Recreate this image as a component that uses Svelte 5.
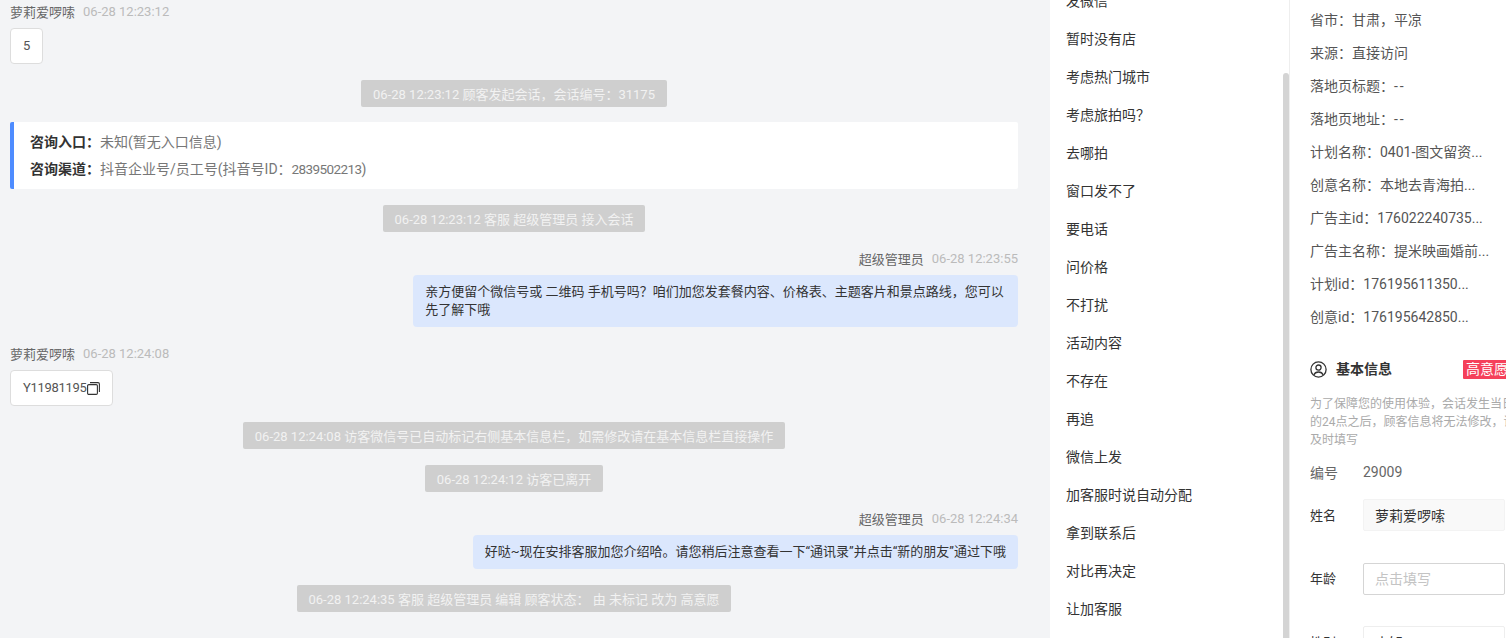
<script>
  const replies = ['发微信', '暂时没有店', '考虑热门城市', '考虑旅拍吗？', '去哪拍', '窗口发不了', '要电话', '问价格', '不打扰', '活动内容', '不存在', '再追', '微信上发', '加客服时说自动分配', '拿到联系后', '对比再决定', '让加客服'];
  const visitor = [
    ['省市', '甘肃，平凉'],
    ['来源', '直接访问'],
    ['落地页标题', '--'],
    ['落地页地址', '--'],
    ['计划名称', '0401-图文留资...'],
    ['创意名称', '本地去青海拍...'],
    ['广告主id', '176022240735...'],
    ['广告主名称', '提米映画婚前...'],
    ['计划id', '176195611350...'],
    ['创意id', '176195642850...']
  ];
</script>

<div class="page">
  <main class="chat">
    <div class="msg">
      <div class="meta"><span class="name">萝莉爱啰嗦</span><span class="time">06-28 12:23:12</span></div>
      <div class="bubble">5</div>
    </div>

    <div class="sys"><span>06-28 12:23:12 顾客发起会话，会话编号：31175</span></div>

    <div class="entry">
      <p><b>咨询入口：</b>未知(暂无入口信息)</p>
      <p><b>咨询渠道：</b>抖音企业号/员工号(抖音号ID：<span class="num">2839502213</span>)</p>
    </div>

    <div class="sys"><span>06-28 12:23:12 客服 超级管理员 接入会话</span></div>

    <div class="msg mine">
      <div class="meta"><span class="name">超级管理员</span><span class="time">06-28 12:23:55</span></div>
      <div class="bubble">亲方便留个微信号或 二维码 手机号吗？咱们加您发套餐内容、价格表、主题客片和景点路线，您可以先了解下哦</div>
    </div>

    <div class="msg">
      <div class="meta"><span class="name">萝莉爱啰嗦</span><span class="time">06-28 12:24:08</span></div>
      <div class="bubble wechat">
        Y11981195<svg class="copy" width="13" height="13" viewBox="0 0 13 13" fill="none" stroke="#333" stroke-width="1.1"><rect x="0.6" y="2.6" width="9.8" height="9.8" rx="1.2" /><path d="M3 .6h8a1.4 1.4 0 0 1 1.4 1.4v8" /></svg>
      </div>
    </div>

    <div class="sys"><span>06-28 12:24:08 访客微信号已自动标记右侧基本信息栏，如需修改请在基本信息栏直接操作</span></div>
    <div class="sys"><span>06-28 12:24:12 访客已离开</span></div>

    <div class="msg mine">
      <div class="meta"><span class="name">超级管理员</span><span class="time">06-28 12:24:34</span></div>
      <div class="bubble">好哒~现在安排客服加您介绍哈。请您稍后注意查看一下“通讯录”并点击“新的朋友”通过下哦</div>
    </div>

    <div class="sys"><span>06-28 12:24:35 客服 超级管理员 编辑 顾客状态： 由 未标记 改为 高意愿</span></div>
  </main>

  <aside class="replies">
    <ul>
      {#each replies as r}
        <li>{r}</li>
      {/each}
    </ul>
    <div class="thumb"></div>
  </aside>

  <aside class="panel">
    <ul class="visitor">
      {#each visitor as [k, v]}
        <li>{k}：<span class:dash={v === '--'}>{v}</span></li>
      {/each}
    </ul>

    <div class="head">
      <svg width="17" height="17" viewBox="0 0 17 17" fill="none" stroke="#333" stroke-width="1.3"><circle cx="8.5" cy="8.5" r="7.6" /><circle cx="8.5" cy="6.6" r="2.6" /><path d="M3.8 14c.8-2 2.6-3 4.7-3s3.900 1 4.700 3" /></svg>
      <h3>基本信息</h3>
      <span class="tag">高意愿</span>
    </div>

    <p class="tip">为了保障您的使用体验，会话发生当日的24点之后，顾客信息将无法修改，请及时填写</p>

    <div class="plain"><label for="no">编号</label><span id="no">29009</span></div>
    <div class="field"><label for="nm">姓名</label><input id="nm" class="off" value="萝莉爱啰嗦" /></div>
    <div class="field"><label for="ag">年龄</label><input id="ag" placeholder="点击填写" /></div>
    <div class="field"><label for="sx">性别</label><input id="sx" class="pale" value="未知" /></div>
  </aside>
</div>

<style>
  :global(body) {
    margin: 0;
    overflow: hidden;
  }

  .page {
    display: flex;
    width: 1540px;
    height: 638px;
    overflow: hidden;
    font-family: Roboto, "Noto Sans CJK SC", sans-serif;
    font-size: 13px;
    color: #333;
    background: #f3f4f6;
  }

  .chat {
    width: 1050px;
    flex: none;
    box-sizing: border-box;
    padding: 1px 32px 0 10px;
  }

  .msg {
    margin-bottom: 16px;
  }

  .meta {
    display: flex;
    gap: 8px;
    align-items: center;
    height: 20px;
    margin-bottom: 7px;
    color: #666;
  }

  .time {
    color: #bbb;
  }

  .bubble {
    width: fit-content;
    max-width: 60%;
    box-sizing: border-box;
    padding: 8px 12px;
    line-height: 18px;
    border: 1px solid #ddd;
    border-radius: 4px;
    background: #fff;
    color: #555;
  }

  .msg:first-child .bubble {
    height: 36px;
  }

  .wechat {
    display: flex;
    align-items: center;
    height: 36px;
    letter-spacing: -0.3px;
  }

  .copy {
    display: block;
  }

  .mine .meta {
    justify-content: flex-end;
  }

  .mine .bubble {
    margin-left: auto;
    border: 0;
    background: #dbe7fd;
    color: #333;
  }

  .sys {
    display: flex;
    justify-content: center;
    margin-bottom: 16px;
  }

  .sys span {
    padding: 2px 12px 0;
    line-height: 25px;
    color: #f2f2f2;
    background: #cfcfcf;
    border-radius: 2px;
    white-space: nowrap;
  }

  .entry {
    margin: -1px 0 16px;
    padding: 7px 16px 6px;
    border-left: 4px solid #4e8cff;
    border-radius: 2px;
    font-size: 14px;
    background: #fff;
    color: #777;
  }

  .entry p {
    margin: 0;
    line-height: 27px;
  }

  .entry b {
    font-weight: 700;
    color: #333;
  }

  .num {
    font-size: 13.5px;
    letter-spacing: -0.6px;
  }

  .replies {
    position: relative;
    width: 240px;
    flex: none;
    box-sizing: border-box;
    border-right: 1px solid #eee;
    font-size: 14px;
    background: #fff;
    overflow: hidden;
  }

  .replies ul {
    list-style: none;
    margin: -18px 0 0;
    padding: 0 0 0 16px;
  }

  .replies li {
    height: 38px;
    line-height: 38px;
  }

  .thumb {
    position: absolute;
    top: 73px;
    right: 0;
    bottom: 0;
    width: 6px;
    border-radius: 3px 3px 0 0;
    background: #d4d4d4;
  }

  .panel {
    width: 250px;
    flex: none;
    box-sizing: border-box;
    padding: 0 20px;
    font-size: 14px;
    background: #fff;
  }

  .visitor {
    list-style: none;
    margin: 4px 0 0;
    padding: 0;
    color: #555;
  }

  .visitor li {
    height: 33px;
    line-height: 33px;
    white-space: nowrap;
  }

  .dash {
    letter-spacing: 2px;
    font-variant-ligatures: none;
  }

  .head {
    display: flex;
    align-items: center;
    margin-top: 25px;
    height: 20px;
  }

  .head svg {
    flex: none;
  }

  .head h3 {
    flex: none;
    margin: 0 0 2px 9px;
    font-size: 14px;
    font-weight: 700;
    color: #333;
  }

  .tag {
    flex: none;
    margin-left: 71px;
    padding: 0 3px;
    line-height: 19px;
    color: #fff;
    background: #f5405a;
    border-radius: 1px;
    white-space: nowrap;
  }

  .tip {
    width: 210px;
    margin: 16px 0 0;
    font-size: 12px;
    line-height: 18px;
    color: #aaa;
  }

  .plain,
  .field {
    display: flex;
    align-items: center;
  }

  .plain {
    margin-top: 14px;
    height: 18px;
    color: #666;
  }

  .plain label,
  .field label {
    width: 53px;
    flex: none;
  }

  .field label {
    margin-top: -2px;
    font-size: 13px;
  }

  .field {
    margin-top: 18px;
    margin-bottom: 31.5px;
    height: 32px;
  }

  .field + .field {
    margin-top: 0;
  }

  input {
    width: 142px;
    height: 32px;
    box-sizing: border-box;
    padding: 0 11px;
    border: 1px solid #d5d5d5;
    border-radius: 2px;
    outline: 0;
    font: inherit;
    color: #333;
    background: #fff;
  }

  input::placeholder {
    color: #c4c4c4;
  }

  input.off {
    border-color: #f3f3f3;
    background: #f9f9f9;
  }

  input.pale {
    border-color: #eee;
  }
</style>
